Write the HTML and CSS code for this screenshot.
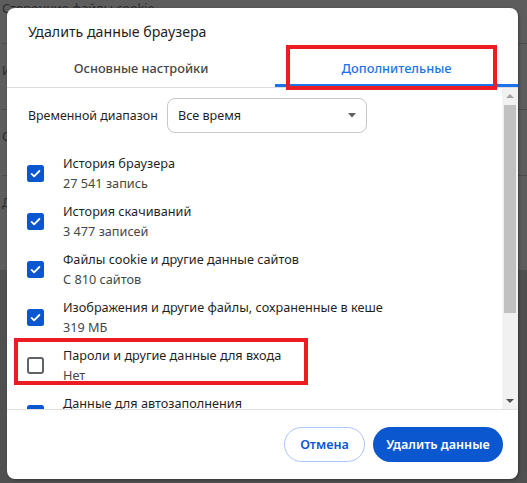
FILE: index.html
```html
<!DOCTYPE html>
<html lang="ru">
<head>
<meta charset="utf-8">
<title>Удалить данные браузера</title>
<link rel="stylesheet" href="styles.css">
</head>
<body>
<div class="page">
  <div class="bg-card">
    <div class="bg-row bg-top"><span>Сторонние файлы cookie</span></div>
    <div class="bg-row bg-sep"><span>Информация</span></div>
    <div class="bg-row bg-sep"><span>Обзор</span></div>
    <div class="bg-row bg-sep"><span>Другие</span></div>
  </div>
  <div class="bg-rest"></div>
</div>

<div class="dialog">
  <h1 class="title">Удалить данные браузера</h1>
  <div class="tabs">
    <div class="tab tab-basic">Основные настройки</div>
    <div class="tab tab-adv">Дополнительные</div>
  </div>
  <div class="body">
    <div class="scroll">
      <div class="range">
        <span class="range-label">Временной диапазон</span>
        <div class="select">
          <span>Все время</span>
          <svg class="caret" width="8" height="5" viewBox="0 0 8 5"><path d="M0 0 L8 0 L4 4.5 Z" fill="#5f5f5f"/></svg>
        </div>
      </div>

      <div class="item">
        <svg class="cb" width="17" height="17" viewBox="0 0 17 17"><rect x="0" y="0" width="17" height="17" rx="2.5" fill="#0b57d0"/><path d="M4.6 8.9 L7.1 11.3 L12.4 6" fill="none" stroke="#fff" stroke-width="1.8" stroke-linecap="round" stroke-linejoin="round"/></svg>
        <div class="txt"><div class="t1">История браузера</div><div class="t2">27 541 запись</div></div>
      </div>
      <div class="item">
        <svg class="cb" width="17" height="17" viewBox="0 0 17 17"><rect x="0" y="0" width="17" height="17" rx="2.5" fill="#0b57d0"/><path d="M4.6 8.9 L7.1 11.3 L12.4 6" fill="none" stroke="#fff" stroke-width="1.8" stroke-linecap="round" stroke-linejoin="round"/></svg>
        <div class="txt"><div class="t1">История скачиваний</div><div class="t2">3 477 записей</div></div>
      </div>
      <div class="item">
        <svg class="cb" width="17" height="17" viewBox="0 0 17 17"><rect x="0" y="0" width="17" height="17" rx="2.5" fill="#0b57d0"/><path d="M4.6 8.9 L7.1 11.3 L12.4 6" fill="none" stroke="#fff" stroke-width="1.8" stroke-linecap="round" stroke-linejoin="round"/></svg>
        <div class="txt"><div class="t1">Файлы cookie и другие данные сайтов</div><div class="t2">С 810 сайтов</div></div>
      </div>
      <div class="item">
        <svg class="cb" width="17" height="17" viewBox="0 0 17 17"><rect x="0" y="0" width="17" height="17" rx="2.5" fill="#0b57d0"/><path d="M4.6 8.9 L7.1 11.3 L12.4 6" fill="none" stroke="#fff" stroke-width="1.8" stroke-linecap="round" stroke-linejoin="round"/></svg>
        <div class="txt"><div class="t1">Изображения и другие файлы, сохраненные в кеше</div><div class="t2">319 МБ</div></div>
      </div>
      <div class="item">
        <svg class="cb" width="17" height="17" viewBox="0 0 17 17"><rect x="1" y="1" width="15" height="15" rx="2" fill="#fff" stroke="#5f6368" stroke-width="2"/></svg>
        <div class="txt"><div class="t1">Пароли и другие данные для входа</div><div class="t2">Нет</div></div>
      </div>
      <div class="item">
        <svg class="cb" width="17" height="17" viewBox="0 0 17 17"><rect x="0" y="0" width="17" height="17" rx="2.5" fill="#0b57d0"/><path d="M4.6 8.9 L7.1 11.3 L12.4 6" fill="none" stroke="#fff" stroke-width="1.8" stroke-linecap="round" stroke-linejoin="round"/></svg>
        <div class="txt"><div class="t1">Данные для автозаполнения</div><div class="t2">Адреса и другие данные</div></div>
      </div>
    </div>
    <div class="scrollbar">
      <svg class="arrow" width="16" height="16" viewBox="0 0 16 16"><path d="M4 10 L12 10 L8 6 Z" fill="#a3a3a3"/></svg>
      <div class="track"><div class="thumb"></div></div>
      <svg class="arrow" width="16" height="16" viewBox="0 0 16 16"><path d="M4 6 L12 6 L8 10 Z" fill="#505050"/></svg>
    </div>
  </div>
  <div class="footer">
    <button class="btn btn-cancel">Отмена</button>
    <button class="btn btn-delete">Удалить данные</button>
  </div>

  <div class="hl hl-tab"></div>
  <div class="hl hl-item"></div>
</div>
</body>
</html>
```

FILE: styles.css
```css
* { box-sizing: border-box; }
html, body { margin: 0; padding: 0; }
body {
  width: 527px;
  height: 483px;
  overflow: hidden;
  background: #505050;
  font-family: "Noto Sans", "Open Sans", "DejaVu Sans", sans-serif;
  position: relative;
}

/* dimmed page behind the dialog */
.page { width: 527px; height: 483px; overflow: hidden; }
.bg-card {
  background: #5d5d5d;
  height: 270px;
  color: #2b2b2b;
  font-size: 12.6px;
  padding-left: 2px;
}
.bg-row {
  line-height: 18px;
}
.bg-top { height: 43px; padding-top: 0; }
.bg-sep { border-top: 1px solid #4c4c4c; height: 66px; padding-top: 18px; }
.bg-rest { height: 213px; background: #505050; }

/* dialog */
.dialog {
  position: absolute;
  left: 7px;
  top: 8px;
  width: 511px;
  height: 471px;
  background: #fff;
  border-radius: 8px;
  box-shadow: 1px 1px 3px rgba(0,0,0,0.35);
  display: flex;
  flex-direction: column;
  overflow: hidden;
}
.title {
  margin: 0;
  padding: 14px 0 0 21px;
  font-size: 14.2px;
  font-weight: 400;
  line-height: 20px;
  color: #1f1f1f;
  height: 42px;
}
.tabs {
  display: grid;
  grid-template-columns: 268px 1fr;
  height: 38px;
  border-bottom: 1px solid #dadce0;
}
.tab {
  text-align: center;
  font-size: 12.8px;
  font-weight: 500;
  line-height: 20px;
  padding-top: 8px;
  color: #474747;
}
.tab-adv {
  color: #1a73e8;
  border-bottom: 3px solid #1a73e8;
}

.body {
  display: flex;
  height: 321px;
}
.scroll {
  flex: 1;
  overflow: hidden;
  padding: 10px 0 0 20px;
}
.range {
  display: flex;
  align-items: center;
  height: 35px;
}
.range-label {
  width: 140px;
  padding-left: 1px;
  font-size: 12.4px;
  color: #1f1f1f;
}
.select {
  width: 200px;
  height: 35px;
  border: 1px solid #c7c7c7;
  border-radius: 8px;
  display: flex;
  align-items: center;
  justify-content: space-between;
  padding: 0 10px 0 10px;
  font-size: 12.6px;
  color: #1f1f1f;
}
.caret { margin-top: -1px; }

.item {
  display: flex;
  align-items: center;
  gap: 19px;
  padding: 4px 0;
}
.range + .item { margin-top: 16px; }
.cb { flex: none; }
.txt { font-size: 12.7px; line-height: 20px; color: #1f1f1f; }
.t2 { color: #444746; }

.scrollbar {
  width: 16px;
  background: #f1f1f1;
  display: flex;
  flex-direction: column;
}
.arrow { display: block; flex: none; }
.track { flex: 1; padding: 1px 2px 0 2px; }
.thumb { height: 208px; background: #c1c1c1; }

.footer {
  border-top: 1px solid #e0e0e0;
  flex: 1;
  display: flex;
  justify-content: flex-end;
  align-items: flex-start;
  gap: 8px;
  padding: 17px 15px 0 0;
}
.btn {
  height: 35px;
  border-radius: 18px;
  font-family: inherit;
  font-size: 12.6px;
  font-weight: 600;
  cursor: pointer;
  padding: 0;
}
.btn-cancel {
  width: 81px;
  background: #fff;
  color: #0b57d0;
  border: 1px solid #a8c7fa;
}
.btn-delete {
  width: 130px;
  background: #0b57d0;
  color: #fff;
  border: none;
}

/* red annotation boxes */
.hl {
  position: absolute;
  border: 4px solid #ed1c24;
  pointer-events: none;
}
.hl-tab { left: 279px; top: 37px; width: 211px; height: 45px; }
.hl-item { left: 7px; top: 330px; width: 294px; height: 47px; }
```
